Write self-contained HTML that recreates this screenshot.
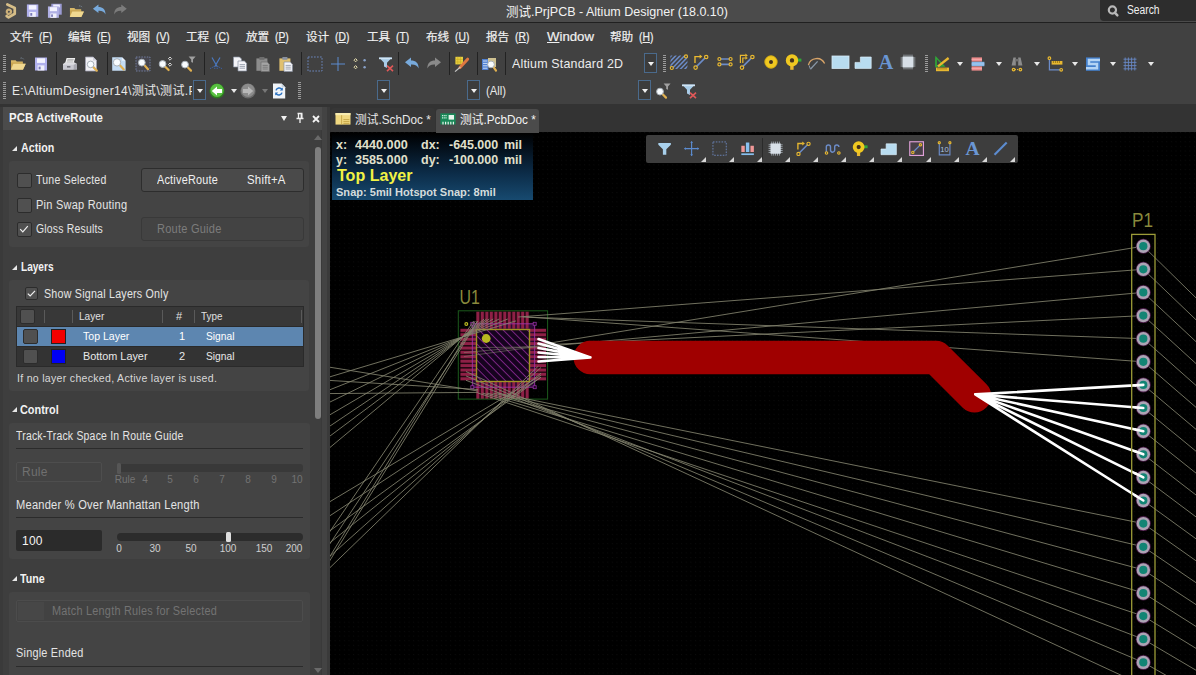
<!DOCTYPE html>
<html><head><meta charset="utf-8"><title>Altium Designer</title>
<style>
html,body{margin:0;padding:0;background:#000;}
body{width:1196px;height:675px;position:relative;overflow:hidden;font-family:"Liberation Sans","Noto Sans CJK SC",sans-serif;font-size:12px;color:#e6e6e6;}
.a{position:absolute;}
.t{position:absolute;white-space:nowrap;line-height:14px;height:14px;}
svg{position:absolute;overflow:visible;}
#title{left:0;top:0;width:1196px;height:22px;background:#4b4b4b;}
#titleline{left:0;top:22px;width:1196px;height:1px;background:#202020;}
#chrome{left:0;top:23px;width:1196px;height:81px;background:#414141;}
#under{left:0;top:104px;width:1196px;height:28px;background:#333333;}
.menu{top:30px;font-size:12.5px;color:#f0f0f0;-webkit-text-stroke:0.2px #f0f0f0;}
.menu u{text-decoration:underline;text-underline-offset:1px;text-decoration-thickness:1px;}
.sep{position:absolute;width:1px;background:#222;}
.grip{position:absolute;width:3px;background:repeating-linear-gradient(to bottom,#9c9c9c 0,#9c9c9c 1px,transparent 1px,transparent 2px);}
.dd{position:absolute;width:13px;height:20px;border:1px solid #4a6a8c;box-sizing:border-box;background:#3c3c3c;}
.dd:after{content:"";position:absolute;left:3px;top:8px;border-left:3px solid transparent;border-right:3px solid transparent;border-top:4px solid #f0f0f0;}
.tri{position:absolute;width:0;height:0;border-left:3px solid transparent;border-right:3px solid transparent;border-top:4px solid #e8e8e8;}
</style></head><body>
<div id="title" class="a"></div>
<div id="titleline" class="a"></div>
<div id="chrome" class="a"></div><div id="under" class="a"></div>
<div class="t" style="transform:scaleX(0.963);transform-origin:0 0;left:506.4px;top:5px;font-size:13px;color:#f2f2f2;">测试.PrjPCB - Altium Designer (18.0.10)</div>
<div class="a" style="left:1100px;top:0;width:96px;height:21px;background:#2d2d2d;border-bottom-left-radius:4px;"></div>
<svg style="left:1104px;top:2px" width="18" height="18" viewBox="0 0 18 18"><circle cx="8.4" cy="8" r="3.6" fill="none" stroke="#b8b8b8" stroke-width="2.2"/><path d="M10.8 10.6 L13.4 13.4" stroke="#b8b8b8" stroke-width="2.4" stroke-linecap="round"/></svg>
<div class="t" style="transform:scaleX(0.857);transform-origin:0 0;left:1126.7px;top:3px;font-size:12px;color:#f0f0f0;">Search</div>
<div class="t menu" style="left:10px;font-size:11.6px">文件</div><div class="t menu" style="left:38.6px;font-size:12px;transform:scaleX(0.86);transform-origin:0 0">(<u>F</u>)</div>
<div class="t menu" style="left:68px;font-size:11.6px">编辑</div><div class="t menu" style="left:96.6px;font-size:12px;transform:scaleX(0.86);transform-origin:0 0">(<u>E</u>)</div>
<div class="t menu" style="left:127px;font-size:11.6px">视图</div><div class="t menu" style="left:155.6px;font-size:12px;transform:scaleX(0.86);transform-origin:0 0">(<u>V</u>)</div>
<div class="t menu" style="left:186px;font-size:11.6px">工程</div><div class="t menu" style="left:214.6px;font-size:12px;transform:scaleX(0.86);transform-origin:0 0">(<u>C</u>)</div>
<div class="t menu" style="left:246px;font-size:11.6px">放置</div><div class="t menu" style="left:274.6px;font-size:12px;transform:scaleX(0.86);transform-origin:0 0">(<u>P</u>)</div>
<div class="t menu" style="left:306px;font-size:11.6px">设计</div><div class="t menu" style="left:334.6px;font-size:12px;transform:scaleX(0.86);transform-origin:0 0">(<u>D</u>)</div>
<div class="t menu" style="left:367px;font-size:11.6px">工具</div><div class="t menu" style="left:395.6px;font-size:12px;transform:scaleX(0.86);transform-origin:0 0">(<u>T</u>)</div>
<div class="t menu" style="left:426px;font-size:11.6px">布线</div><div class="t menu" style="left:454.6px;font-size:12px;transform:scaleX(0.86);transform-origin:0 0">(<u>U</u>)</div>
<div class="t menu" style="left:486px;font-size:11.6px">报告</div><div class="t menu" style="left:514.6px;font-size:12px;transform:scaleX(0.86);transform-origin:0 0">(<u>R</u>)</div>
<div class="t menu" style="transform:scaleX(1.057);transform-origin:0 0;left:547.0px;font-size:12.5px"><u>W</u>indow</div>
<div class="t menu" style="left:610px;font-size:11.6px">帮助</div><div class="t menu" style="left:638.6px;font-size:12px;transform:scaleX(0.86);transform-origin:0 0">(<u>H</u>)</div>
<div class="sep" style="left:56px;top:52px;height:23px"></div>
<div class="sep" style="left:107px;top:52px;height:23px"></div>
<div class="sep" style="left:204px;top:52px;height:23px"></div>
<div class="sep" style="left:301px;top:52px;height:23px"></div>
<div class="sep" style="left:398px;top:52px;height:23px"></div>
<div class="sep" style="left:449px;top:52px;height:23px"></div>
<div class="sep" style="left:477px;top:52px;height:23px"></div>
<div class="sep" style="left:505px;top:52px;height:23px"></div>
<div class="grip" style="left:3px;top:55px;height:17px"></div>
<div class="grip" style="left:3px;top:82px;height:17px"></div>
<div class="grip" style="left:298px;top:82px;height:17px"></div>
<div class="grip" style="left:663px;top:55px;height:17px"></div>
<div class="grip" style="left:925px;top:55px;height:17px"></div>
<div class="t" style="transform:scaleX(0.956);transform-origin:0 0;left:511.8px;top:57px;font-size:13px;color:#ececec;letter-spacing:0.2px">Altium Standard 2D</div>
<div class="dd" style="left:644px;top:53px"></div>
<div class="a" style="left:10px;top:82px;width:182px;height:17px;overflow:hidden"><div class="t" style="left:2px;top:2px;font-size:12px;color:#e8e8e8;letter-spacing:0.35px">E:\AltiumDesigner14\测试\测试.PcbDoc</div></div>
<div class="dd" style="left:193px;top:80px"></div>
<div class="dd" style="left:377px;top:80px"></div>
<div class="dd" style="left:467px;top:80px"></div>
<div class="dd" style="left:638px;top:80px"></div>
<div class="t" style="transform:scaleX(0.942);transform-origin:0 0;left:485.9px;top:84px;font-size:12px;color:#e8e8e8;">(All)</div>
<div class="tri" style="left:957px;top:62px"></div>
<div class="tri" style="left:996px;top:62px"></div>
<div class="tri" style="left:1034px;top:62px"></div>
<div class="tri" style="left:1072px;top:62px"></div>
<div class="tri" style="left:1110px;top:62px"></div>
<div class="tri" style="left:1148px;top:62px"></div>
<div class="tri" style="left:231px;top:89px"></div><div class="tri" style="left:262px;top:89px;border-top-color:#777"></div>
<svg style="left:4.4px;top:2.2px" width="20" height="20" viewBox="0 0 22.73 22.73"><path d="M3.8 2.8L12.2 6.8V13.4L5.2 17.4L3 16" stroke="#d6be88" stroke-width="3.1" fill="none" stroke-linejoin="round" stroke-linecap="round"/><path d="M3.2 11.6C2.8 8 8 7.6 8 11C8 13 5.8 14 4 13.2" stroke="#ccb078" stroke-width="2.6" fill="none" stroke-linecap="round"/></svg>
<svg style="left:25.4px;top:3.4px" width="16" height="16" viewBox="0 0 16.84 16.84"><rect x="2" y="1.5" width="12" height="13" fill="#b0b0ec"/><rect x="4" y="2.3" width="8" height="4.6" fill="#f4f4ff"/><rect x="4.6" y="9.4" width="6.8" height="5.1" fill="#f0f0fa"/><rect x="5.6" y="10.6" width="2" height="2.8" fill="#7878b8"/></svg>
<svg style="left:47.4px;top:3.4px" width="16" height="16" viewBox="0 0 16.84 16.84"><rect x="4.5" y="0.8" width="11" height="11.5" fill="#9c9cd4"/><rect x="6.5" y="1.6" width="7" height="3" fill="#f0f0ff"/><rect x="1" y="3.6" width="11.5" height="12" fill="#b0b0e4"/><rect x="3" y="4.4" width="7.5" height="4.2" fill="#f4f4ff"/><rect x="3.6" y="11" width="6.4" height="4.6" fill="#f0f0fa"/><rect x="4.4" y="12" width="1.8" height="2.6" fill="#7878b8"/></svg>
<svg style="left:69.4px;top:4.4px" width="16" height="16" viewBox="0 0 16.84 16.84"><path d="M1 4.2h4.6l1.2 1.4h6v2H1z" fill="#d8b868"/><path d="M1 13.6V6.6h11.8v1.2H15.6L13 13.6z" fill="#c8a450"/><path d="M3.4 7.8H15.8L13 13.8H0.8z" fill="#f0d890"/><path d="M10.5 2.2c1.4-.6 2.6 0 3.2 1.2" stroke="#7a8a9a" stroke-width="0.9" fill="none" stroke-dasharray="1.4 0.8"/></svg>
<svg style="left:91.6px;top:3.1px" width="16" height="16" viewBox="0 0 17.39 17.39"><path d="M1 6.2L7 1.6V4.4C11.6 4.4 14.8 7 14.6 12.4C13.4 9.4 11 8.2 7 8.4V11z" fill="#78aadc"/></svg>
<svg style="left:113.1px;top:3.1px" width="16" height="16" viewBox="0 0 17.39 17.39"><path d="M15 6.2L9 1.6V4.4C4.4 4.4 1.2 7 1.4 12.4C2.6 9.4 5 8.2 9 8.4V11z" fill="#7c7c7c"/></svg>
<svg style="left:9.6px;top:55.5px" width="16" height="16" viewBox="0 0 16.00 16.00"><path d="M1 4.2h4.6l1.2 1.4h6v2H1z" fill="#d8b868"/><path d="M1 13.6V6.6h11.8v1.2H15.6L13 13.6z" fill="#c8a450"/><path d="M3.4 7.8H15.8L13 13.8H0.8z" fill="#f0d890"/><path d="M10.5 2.2c1.4-.6 2.6 0 3.2 1.2" stroke="#7a8a9a" stroke-width="0.9" fill="none" stroke-dasharray="1.4 0.8"/></svg>
<svg style="left:32.8px;top:55.5px" width="16" height="16" viewBox="0 0 16.00 16.00"><rect x="2" y="1.5" width="12" height="13" fill="#b0b0ec"/><rect x="4" y="2.3" width="8" height="4.6" fill="#f4f4ff"/><rect x="4.6" y="9.4" width="6.8" height="5.1" fill="#f0f0fa"/><rect x="5.6" y="10.6" width="2" height="2.8" fill="#7878b8"/></svg>
<svg style="left:61.6px;top:55.5px" width="16" height="16" viewBox="0 0 16.00 16.00"><path d="M4.6 2h8.6l-1.6 5.6H3z" fill="#f4f4f4"/><path d="M5.4 3.4h6.4M5 4.8h6.4M4.6 6.2h6.4" stroke="#9a9a9a" stroke-width="0.7"/><path d="M1 8L3 6.6h9.6L15 8v5.4H1z" fill="#dcdce0"/><rect x="1" y="8.8" width="10.6" height="4.8" fill="#c8c8d0"/><path d="M11.6 8.8L15 7.6v5.2l-3.4 0.8z" fill="#a8a8b0"/><rect x="5" y="10" width="3.4" height="1.6" fill="#707078"/></svg>
<svg style="left:83.0px;top:55.5px" width="16" height="16" viewBox="0 0 16.00 16.00"><path d="M2.5 1h7.6l3.4 3.4V15H2.5z" fill="#f0f0f4" stroke="#a0a0b0" stroke-width="0.8"/><path d="M10 1v3.6h3.6" fill="#d0d0dc"/><path d="M9.975999999999999 10.776L13.8 14.6" stroke="#e0b050" stroke-width="2.2" stroke-linecap="round"/><circle cx="7.6" cy="8.4" r="3.3" fill="#f8fcff" stroke="#a8b0b8" stroke-width="1"/></svg>
<svg style="left:111.2px;top:55.5px" width="16" height="16" viewBox="0 0 16.00 16.00"><path d="M1.2 1.2h9.8l3.6 3.6V14.8H1.2z" fill="#c4dcf4"/><path d="M11 1.2v3.6h3.6" fill="#e8f0fa"/><path d="M8.664 9.064L12.8 13.4" stroke="#e0b050" stroke-width="2.2" stroke-linecap="round"/><circle cx="6" cy="6.4" r="3.7" fill="#f8fcff" stroke="#a8b0b8" stroke-width="1"/></svg>
<svg style="left:134.6px;top:55.5px" width="16" height="16" viewBox="0 0 16.00 16.00"><rect x="1" y="1" width="14" height="14" fill="#46464e" stroke="#7c8ab4" stroke-width="0.8" stroke-dasharray="1.5 1.2"/><path d="M9.248 9.048L13 13.2" stroke="#e0b050" stroke-width="2.2" stroke-linecap="round"/><circle cx="6.8" cy="6.6" r="3.4" fill="#f8fcff" stroke="#a8b0b8" stroke-width="1"/></svg>
<svg style="left:157.4px;top:55.5px" width="16" height="16" viewBox="0 0 16.00 16.00"><path d="M8.048 10.448L11.6 14" stroke="#e0b050" stroke-width="2.2" stroke-linecap="round"/><circle cx="5.6" cy="8" r="3.4" fill="#f8fcff" stroke="#a8b0b8" stroke-width="1"/><path d="M13 1l1.6 1.6L13 4.2 11.4 2.6zM13 7l1.6 1.6L13 10.2 11.4 8.6z" fill="none" stroke="#e8e8e8" stroke-width="0.9"/></svg>
<svg style="left:179.8px;top:55.5px" width="16" height="16" viewBox="0 0 16.00 16.00"><path d="M7.448 11.048L11 14.6" stroke="#e0b050" stroke-width="2.2" stroke-linecap="round"/><circle cx="5" cy="8.6" r="3.4" fill="#f8fcff" stroke="#a8b0b8" stroke-width="1"/><path d="M8.6 0.6h7l-2.6 3v3.2l-1.8 -0.8V3.6z" fill="#a0a0a0"/></svg>
<svg style="left:208.2px;top:55.5px" width="16" height="16" viewBox="0 0 16.00 16.00"><path d="M4 1.5L9.4 11M12 1.5L6.6 11" stroke="#4a78c0" stroke-width="1.2"/><path d="M2 12.6l4 -2 1 2.4M14 12.6l-4 -2 -1 2.4" stroke="#3a60a8" stroke-width="1" fill="none" stroke-dasharray="1.2 0.8"/></svg>
<svg style="left:231.6px;top:55.5px" width="16" height="16" viewBox="0 0 16.00 16.00"><path d="M1.5 1h6l2 2v8h-8z" fill="#f4f4f8" stroke="#8890a0" stroke-width="0.7"/><path d="M6 5h6.4l2.2 2.2V15H6z" fill="#f4f4f8" stroke="#8890a0" stroke-width="0.7"/><path d="M7.6 8.6h5.4M7.6 10.4h5.4M7.6 12.2h5.4" stroke="#8890a0" stroke-width="0.8"/></svg>
<svg style="left:255.0px;top:55.5px" width="16" height="16" viewBox="0 0 16.00 16.00"><rect x="1.4" y="2.4" width="11" height="12.4" fill="#8c8c8c"/><rect x="4.4" y="1" width="5" height="2.8" fill="#6e6e6e"/><path d="M6 6h6.2l2.2 2.2V15.4H6z" fill="#a4a4a4" stroke="#6e6e6e" stroke-width="0.7"/><path d="M7.6 9.4h5.2M7.6 11.2h5.2M7.6 13h5.2" stroke="#6e6e6e" stroke-width="0.8"/></svg>
<svg style="left:277.8px;top:55.5px" width="16" height="16" viewBox="0 0 16.00 16.00"><rect x="1.4" y="2.4" width="11" height="12.4" fill="#e0c070"/><rect x="4.4" y="1" width="5" height="2.8" fill="#8890a0"/><path d="M6 6h6.2l2.2 2.2V15.4H6z" fill="#f4f4f8" stroke="#8890a0" stroke-width="0.7"/><path d="M7.6 9.4h5.2M7.6 11.2h5.2M7.6 13h5.2" stroke="#8890a0" stroke-width="0.8"/></svg>
<svg style="left:306.5px;top:55.5px" width="16" height="16" viewBox="0 0 16.00 16.00"><rect x="1" y="1" width="14" height="14" fill="none" stroke="#6a84b8" stroke-width="1" stroke-dasharray="1.7 1.3"/></svg>
<svg style="left:329.5px;top:55.5px" width="16" height="16" viewBox="0 0 16.00 16.00"><path d="M8 1v14M1 8h14" stroke="#5c8cd0" stroke-width="1"/></svg>
<svg style="left:352.2px;top:55.5px" width="16" height="16" viewBox="0 0 16.00 16.00"><path d="M3.6 2.6l1.6 1.6-1.6 1.6L2 4.2zM3.6 9.6l1.6 1.6-1.6 1.6L2 11.2z" fill="none" stroke="#e8e0b0" stroke-width="1"/><circle cx="12.6" cy="4.2" r="1.2" fill="#88a0c8"/><circle cx="12.6" cy="11.2" r="1.2" fill="#88a0c8"/></svg>
<svg style="left:378.2px;top:55.5px" width="16" height="16" viewBox="0 0 16.00 16.00"><path d="M1 1.6h13l-5 5.2V12l-3 -1.4V6.8z" fill="#a8cce8"/><rect x="1" y="1.6" width="13" height="1.6" fill="#d0e4f4"/><path d="M9 9.6l6 5.6M15 9.6l-6 5.6" stroke="#e05858" stroke-width="1.6"/></svg>
<svg style="left:404.0px;top:55.5px" width="16" height="16" viewBox="0 0 16.00 16.00"><path d="M1 6.2L7 1.6V4.4C11.6 4.4 14.8 7 14.6 12.4C13.4 9.4 11 8.2 7 8.4V11z" fill="#78aadc"/></svg>
<svg style="left:425.8px;top:55.5px" width="16" height="16" viewBox="0 0 16.00 16.00"><path d="M15 6.2L9 1.6V4.4C4.4 4.4 1.2 7 1.4 12.4C2.6 9.4 5 8.2 9 8.4V11z" fill="#8a8a8a"/></svg>
<svg style="left:453.4px;top:55.5px" width="16" height="16" viewBox="0 0 16.00 16.00"><rect x="2.4" y="0.8" width="7.6" height="7.6" fill="#e8d040"/><path d="M4.8 0.8v7.6M7.4 0.8v7.6M2.4 3.4h7.6M2.4 6h7.6" stroke="#c8a820" stroke-width="0.6"/><path d="M14.6 3.2L7 11.4" stroke="#e07840" stroke-width="3" stroke-linecap="round"/><path d="M7.4 11L2 15.6" stroke="#c8c8c8" stroke-width="1.2"/></svg>
<svg style="left:481.2px;top:55.5px" width="16" height="16" viewBox="0 0 16.00 16.00"><rect x="1" y="3" width="6.4" height="11" fill="#5080d0"/><path d="M2 5h4.4M2 7.4h4.4M2 9.8h4.4M2 12.2h4.4" stroke="#c8dcf8" stroke-width="1"/><rect x="7" y="2" width="8" height="9" fill="#e8d8a0" opacity="0.85"/><path d="M12.448 10.848L15 14.6" stroke="#e0b050" stroke-width="2.2" stroke-linecap="round"/><circle cx="10" cy="8.4" r="3.4" fill="#f8fcff" stroke="#a8b0b8" stroke-width="1"/></svg>
<svg style="left:670.8px;top:54.4px" width="16" height="16" viewBox="0 0 16.00 16.00"><clipPath id="arclip"><rect x="-0.6" y="1.6" width="17" height="13.4"/></clipPath><g clip-path="url(#arclip)"><g stroke="#6c8cc8" stroke-width="1.5"><path d="M-13 15.5L1 1"/><path d="M-8.6 15.5L5.4 1"/><path d="M-4.2 15.5L9.8 1"/><path d="M0.2 15.5L14.2 1"/><path d="M4.6 15.5L18.6 1"/><path d="M9 15.5L23 1"/><path d="M13.4 15.5L27.4 1"/></g></g><circle cx="0.8" cy="14" r="1.5" fill="#414141" stroke="#e8b830" stroke-width="1.2"/><circle cx="15" cy="2.4" r="1.5" fill="#414141" stroke="#e8b830" stroke-width="1.2"/></svg>
<svg style="left:693.0px;top:54.4px" width="16" height="16" viewBox="0 0 16.00 16.00"><path d="M2.6 13.4L12.6 3.4" stroke="#6c8cc8" stroke-width="1.6"/><path d="M2 9V2.6h5" stroke="#e8b830" stroke-width="1.4" fill="none"/><path d="M6.6 0.4L9.4 2.6 6.6 4.8z" fill="#e8b830"/><circle cx="2.6" cy="13.6" r="1.7" fill="#414141" stroke="#e8b830" stroke-width="1.2"/><circle cx="13.2" cy="3" r="1.7" fill="#414141" stroke="#e8b830" stroke-width="1.2"/></svg>
<svg style="left:716.9px;top:54.4px" width="16" height="16" viewBox="0 0 16.00 16.00"><path d="M3 5h10M3 10.4h10" stroke="#6c8cc8" stroke-width="1.6"/><circle cx="2.4" cy="5" r="1.5" fill="#414141" stroke="#e8b830" stroke-width="1.2"/><circle cx="13.6" cy="5" r="1.5" fill="#414141" stroke="#e8b830" stroke-width="1.2"/><circle cx="2.4" cy="10.4" r="1.5" fill="#414141" stroke="#e8b830" stroke-width="1.2"/><circle cx="13.6" cy="10.4" r="1.5" fill="#414141" stroke="#e8b830" stroke-width="1.2"/></svg>
<svg style="left:739.0px;top:54.4px" width="16" height="16" viewBox="0 0 16.00 16.00"><path d="M3 13.4L13 3.4" stroke="#6c8cc8" stroke-width="1.6"/><path d="M1.4 9V1.4h5.4M3.8 9V4h3" stroke="#e8b830" stroke-width="1.2" fill="none"/><path d="M6.4 -0.4L8.8 1.4 6.4 3.2zM6.4 2.4L8.8 4 6.4 5.8z" fill="#e8b830"/><circle cx="3" cy="13.6" r="1.7" fill="#414141" stroke="#e8b830" stroke-width="1.2"/><circle cx="13.4" cy="3" r="1.7" fill="#414141" stroke="#e8b830" stroke-width="1.2"/></svg>
<svg style="left:763.2px;top:54.4px" width="16" height="16" viewBox="0 0 16.00 16.00"><circle cx="8" cy="8" r="4.2" fill="none" stroke="#f0c820" stroke-width="4.4"/><circle cx="8" cy="8" r="6.2" fill="none" stroke="#c8a010" stroke-width="0.7"/><circle cx="8" cy="8" r="1.5" fill="#4a3010"/></svg>
<svg style="left:785.4px;top:54.4px" width="16" height="16" viewBox="0 0 16.00 16.00"><rect x="10.4" y="4.6" width="6" height="3" fill="#30a838"/><rect x="5.2" y="10.4" width="3.4" height="5.4" fill="#e8b830"/><circle cx="7" cy="6.4" r="4.2" fill="none" stroke="#f0c820" stroke-width="4"/><circle cx="7" cy="6.4" r="1.8" fill="#4a3010"/></svg>
<svg style="left:808.4px;top:54.4px" width="16" height="16" viewBox="0 0 16.00 16.00"><path d="M0.4 11A8.6 8.6 0 0 1 16.6 9.6" stroke="#d8a468" stroke-width="1.3" fill="none"/><path d="M2.6 15L9.6 7.4" stroke="#8a98a8" stroke-width="1.3"/><path d="M1 11.4l1.6 4" stroke="#8a98a8" stroke-width="1"/></svg>
<svg style="left:831.8px;top:54.4px" width="16" height="16" viewBox="0 0 16.00 16.00"><rect x="0" y="2" width="17" height="12.4" fill="#b8dcf0"/><rect x="0" y="2" width="17" height="12.4" fill="none" stroke="#d8ecf8" stroke-width="0.8"/></svg>
<svg style="left:854.9px;top:54.4px" width="16" height="16" viewBox="0 0 16.00 16.00"><path d="M0 14.4V8.4h5.4V3h10.8v11.4z" fill="#b8dcf0"/><path d="M0 14.4V8.4h5.4V3h10.8v11.4z" fill="none" stroke="#d8ecf8" stroke-width="0.7"/></svg>
<svg style="left:877.6px;top:54.4px" width="16" height="16" viewBox="0 0 16.00 16.00"><text x="8" y="15" text-anchor="middle" font-family="Liberation Serif, serif" font-size="20.5" font-weight="bold" fill="#6a96d4">A</text></svg>
<svg style="left:900.0px;top:54.4px" width="16" height="16" viewBox="0 0 16.00 16.00"><path d="M4 0.6v14.8M0.6 4h14.8" stroke="#a8b0b8" stroke-width="0.9"/><path d="M6 0.6v14.8M0.6 6h14.8" stroke="#a8b0b8" stroke-width="0.9"/><path d="M8 0.6v14.8M0.6 8h14.8" stroke="#a8b0b8" stroke-width="0.9"/><path d="M10 0.6v14.8M0.6 10h14.8" stroke="#a8b0b8" stroke-width="0.9"/><path d="M12 0.6v14.8M0.6 12h14.8" stroke="#a8b0b8" stroke-width="0.9"/><rect x="2.6" y="2.6" width="10.8" height="10.8" fill="#d8e0e8"/></svg>
<svg style="left:933.5px;top:56.0px" width="16" height="16" viewBox="0 0 16.00 16.00"><path d="M2 11.6V1.6M2 11.6" stroke="#30a838" stroke-width="1.2"/><path d="M2 1.4l8 8.6H2z" fill="none" stroke="#30a838" stroke-width="1.3"/><path d="M4 10.4L14.6 2" stroke="#e8b830" stroke-width="2.4"/><rect x="2" y="11.6" width="13" height="3.6" fill="#e8b830"/><path d="M4 11.6v2M6 11.6v2M8 11.6v2M10 11.6v2M12 11.6v2" stroke="#806010" stroke-width="0.7"/></svg>
<svg style="left:970.3px;top:56.0px" width="16" height="16" viewBox="0 0 16.00 16.00"><rect x="1.6" y="1.4" width="10.4" height="4.2" fill="#ee8c8c"/><rect x="1.6" y="5.8" width="12.8" height="4.4" fill="#88b8e8"/><rect x="1.6" y="10.4" width="10.4" height="4.2" fill="#ee8c8c"/><path d="M1.6 3.4h10.4M1.6 12.4h10.4" stroke="#f8b0b0" stroke-width="0.8"/><path d="M1.6 8h12.8" stroke="#b0d4f4" stroke-width="0.8"/></svg>
<svg style="left:1008.7px;top:56.0px" width="16" height="16" viewBox="0 0 16.00 16.00"><path d="M2.6 9.6L4.4 1.6h2.4v8zM13.4 9.6L11.6 1.6H9.2v8z" fill="#8c8c8c"/><rect x="6.4" y="3" width="3.2" height="2.4" fill="#707070"/><circle cx="4.6" cy="13.6" r="1.3" fill="#414141" stroke="#e8b830" stroke-width="1.2"/><circle cx="11.4" cy="13.6" r="1.3" fill="#414141" stroke="#e8b830" stroke-width="1.2"/><path d="M6 13.6h4" stroke="#e8b830" stroke-width="1" stroke-dasharray="1 1"/></svg>
<svg style="left:1047.2px;top:56.0px" width="16" height="16" viewBox="0 0 16.00 16.00"><path d="M2.4 2.4v11.4h11.6" stroke="#6c8cc8" stroke-width="1.2" fill="none"/><rect x="4.6" y="5" width="10.8" height="3.6" fill="#e8b830"/><path d="M6.4 5v2M8.4 5v2M10.4 5v2M12.4 5v2" stroke="#806010" stroke-width="0.7"/><circle cx="2.4" cy="2.2" r="1.3" fill="#414141" stroke="#e8b830" stroke-width="1.2"/><circle cx="14.2" cy="13.8" r="1.3" fill="#414141" stroke="#e8b830" stroke-width="1.2"/></svg>
<svg style="left:1085.0px;top:56.0px" width="16" height="16" viewBox="0 0 16.00 16.00"><rect x="1" y="1.4" width="14" height="13.4" fill="#4480cc"/><path d="M15 4H4V8.1H12V12.2H1" stroke="#b4d4f4" stroke-width="2.5" fill="none"/></svg>
<svg style="left:1122.4px;top:56.0px" width="16" height="16" viewBox="0 0 16.00 16.00"><path d="M3.2 1.5v13M1.5 3.2h13" stroke="#6888c4" stroke-width="0.9"/><path d="M6.4 1.5v13M1.5 6.4h13" stroke="#6888c4" stroke-width="0.9"/><path d="M9.6 1.5v13M1.5 9.6h13" stroke="#6888c4" stroke-width="0.9"/><path d="M12.8 1.5v13M1.5 12.8h13" stroke="#6888c4" stroke-width="0.9"/></svg>
<svg style="left:209.0px;top:82.6px" width="16" height="16" viewBox="0 0 16.00 16.00"><circle cx="8" cy="8" r="7.6" fill="#2c7820"/><circle cx="8" cy="7.4" r="6.6" fill="#58c040"/><path d="M2.8 8L8 3.4V6h5v4H8v2.6z" fill="#ffffff"/></svg>
<svg style="left:240.0px;top:82.6px" width="16" height="16" viewBox="0 0 16.00 16.00"><circle cx="8" cy="8" r="7.6" fill="#6a6a6a"/><circle cx="8" cy="7.4" r="6.6" fill="#8c8c8c"/><path d="M13.2 8L8 3.4V6H3v4h5v2.6z" fill="#b8b8b8"/></svg>
<svg style="left:271.0px;top:82.6px" width="16" height="16" viewBox="0 0 16.00 16.00"><path d="M2 0.6h8.6l3.6 3.6V15.4H2z" fill="#f0f4f8"/><path d="M10.6 0.6v3.6h3.6" fill="#c8d4e0"/><path d="M5 7.4A3.4 3.4 0 0 1 11 6.4M11 9.6A3.4 3.4 0 0 1 5 10.6" stroke="#2870c0" stroke-width="1.5" fill="none"/><path d="M11.8 4.4v3h-3zM4.2 12.6v-3h3z" fill="#2870c0"/></svg>
<svg style="left:654.5px;top:82.6px" width="16" height="16" viewBox="0 0 16.00 16.00"><path d="M7.448 11.048L11 14.6" stroke="#e0b050" stroke-width="2.2" stroke-linecap="round"/><circle cx="5" cy="8.6" r="3.4" fill="#f8fcff" stroke="#a8b0b8" stroke-width="1"/><path d="M8.6 0.6h7l-2.6 3v3.2l-1.8 -0.8V3.6z" fill="#a0a0a0"/></svg>
<svg style="left:680.5px;top:82.6px" width="16" height="16" viewBox="0 0 16.00 16.00"><path d="M1 1.6h13l-5 5.2V12l-3 -1.4V6.8z" fill="#a8cce8"/><rect x="1" y="1.6" width="13" height="1.6" fill="#d0e4f4"/><path d="M9 9.6l6 5.6M15 9.6l-6 5.6" stroke="#e05858" stroke-width="1.6"/></svg>

<style>
#panel{left:0;top:107px;width:330px;height:568px;background:#3a3a3a;}
#pbody{left:3px;top:130px;width:318px;height:546px;background:#3e3e3e;}
#phead{left:3px;top:107px;width:319px;height:23px;background:#4b4b4b;}
#gap{left:322px;top:107px;width:5px;height:568px;background:#434343;}
.grp{position:absolute;background:#444444;border-radius:3px;}
.sec{font-weight:bold;color:#f2f2f2;font-size:12px;}
.arr{position:absolute;width:0;height:0;border-left:5.4px solid transparent;border-bottom:5.4px solid #e8e8e8;margin-top:0.6px;margin-left:0.6px}
.cb{position:absolute;width:14.5px;height:14.5px;box-sizing:border-box;background:#505050;border:1px solid #2c2c2c;border-radius:2px;}
.lbl{color:#e4e4e4;font-size:12px;letter-spacing:0.25px;}
.btn{position:absolute;box-sizing:border-box;border:1px solid #2d2d2d;border-radius:3px;background:#4a4a4a;}
.hr{position:absolute;height:1px;background:#2b2b2b;}
.sl{font-size:10px;color:#cfcfcf;transform:translateX(-50%);}
.sld{font-size:10px;color:#737373;transform:translateX(-50%);}
</style>
<div id="panel" class="a"></div><div id="pbody" class="a"></div><div id="phead" class="a"></div><div id="gap" class="a"></div>
<div class="t" style="transform:scaleX(0.917);transform-origin:0 0;left:8.7px;top:111px;font-weight:bold;font-size:12.5px;color:#f4f4f4;">PCB ActiveRoute</div>
<div class="a" style="left:281px;top:116px;width:0;height:0;border-left:3.6px solid transparent;border-right:3.6px solid transparent;border-top:5px solid #f0f0f0;"></div>
<svg style="left:294px;top:112px" width="12" height="12" viewBox="0 0 12 12"><path d="M3.5 1.5h5M4.5 1.5v5M7.8 1.5v5M2.5 6.5h7M6 6.5v4.5" stroke="#f0f0f0" stroke-width="1.3" fill="none"/><rect x="6.6" y="2" width="1.6" height="4.5" fill="#f0f0f0"/></svg>
<svg style="left:311.3px;top:113.7px" width="10" height="10" viewBox="0 0 10 10"><path d="M2 2L8 8M8 2L2 8" stroke="#f4f4f4" stroke-width="1.8"/></svg>

<div class="arr" style="left:11px;top:145px"></div>
<div class="t sec" style="transform:scaleX(0.889);transform-origin:0 0;left:20.7px;top:141px;">Action</div>
<div class="grp" style="left:9px;top:161px;width:300px;height:86px"></div>
<div class="cb" style="left:17px;top:173px"></div><div class="t lbl" style="transform:scaleX(0.879);transform-origin:0 0;left:36.3px;top:173px">Tune Selected</div>
<div class="cb" style="left:17px;top:198px"></div><div class="t lbl" style="transform:scaleX(0.918);transform-origin:0 0;left:36.3px;top:198px">Pin Swap Routing</div>
<div class="cb" style="left:17px;top:222px"></div><div class="t lbl" style="transform:scaleX(0.866);transform-origin:0 0;left:36.3px;top:222px">Gloss Results</div>
<svg style="left:17px;top:222px" width="14" height="14" viewBox="0 0 14 14"><path d="M3.2 7.2L5.8 9.8L10.8 4.2" stroke="#f0f0f0" stroke-width="1.2" fill="none"/></svg>
<div class="btn" style="left:141px;top:168px;width:163px;height:24px"></div>
<div class="t lbl" style="transform:scaleX(0.904);transform-origin:0 0;left:157.0px;top:173px;color:#f0f0f0">ActiveRoute</div>
<div class="t lbl" style="transform:scaleX(0.949);transform-origin:0 0;left:247.3px;top:173px;color:#f0f0f0">Shift+A</div>
<div class="btn" style="left:141px;top:217px;width:163px;height:24px;background:#434343;border-color:#393939"></div>
<div class="t lbl" style="transform:scaleX(0.920);transform-origin:0 0;left:157.0px;top:222px;color:#7c7c7c">Route Guide</div>

<div class="arr" style="left:11px;top:264px"></div>
<div class="t sec" style="transform:scaleX(0.840);transform-origin:0 0;left:20.9px;top:260px;">Layers</div>
<div class="grp" style="left:9px;top:280px;width:300px;height:111px"></div>
<div class="cb" style="left:25px;top:287px;width:13px;height:13px"></div>
<svg style="left:25px;top:287px" width="13" height="13" viewBox="0 0 13 13"><path d="M2.8 6.6L5.2 9L10 3.8" stroke="#f0f0f0" stroke-width="1.2" fill="none"/></svg>
<div class="t lbl" style="transform:scaleX(0.890);transform-origin:0 0;left:43.6px;top:287px">Show Signal Layers Only</div>
<div class="a" style="left:16px;top:306px;width:288px;height:61px;background:#2a2a2a;"></div>
<div class="a" style="left:17px;top:307px;width:286px;height:19px;background:#383838;"></div>
<div class="a" style="left:17px;top:327px;width:286px;height:19px;background:#5d86b0;"></div>
<div class="a" style="left:17px;top:347px;width:286px;height:19px;background:#333333;"></div>
<div class="cb" style="left:20px;top:309px;"></div>
<div class="cb" style="left:23px;top:329px;"></div>
<div class="cb" style="left:23px;top:349px;"></div>
<div class="a" style="left:51px;top:329px;width:15px;height:15px;background:#f40000;border:1px solid #222;box-sizing:border-box"></div>
<div class="a" style="left:51px;top:349px;width:15px;height:15px;background:#0000f4;border:1px solid #222;box-sizing:border-box"></div>
<div class="sep" style="left:44px;top:310px;height:13px;background:#5a5a5a"></div>
<div class="sep" style="left:72px;top:310px;height:13px;background:#5a5a5a"></div>
<div class="sep" style="left:162px;top:310px;height:13px;background:#5a5a5a"></div>
<div class="sep" style="left:194px;top:310px;height:13px;background:#5a5a5a"></div>
<div class="sep" style="left:301px;top:310px;height:13px;background:#5a5a5a"></div>
<div class="t" style="transform:scaleX(0.919);transform-origin:0 0;left:79.2px;top:309px;font-size:11px;color:#e0e0e0">Layer</div>
<div class="t" style="left:176px;top:309px;font-size:11px;color:#e0e0e0">#</div>
<div class="t" style="transform:scaleX(0.897);transform-origin:0 0;left:201.0px;top:309px;font-size:11px;color:#e0e0e0">Type</div>
<div class="t" style="transform:scaleX(0.958);transform-origin:0 0;left:83.2px;top:329px;font-size:11px;color:#fff">Top Layer</div>
<div class="t" style="left:179px;top:329px;font-size:11px;color:#fff">1</div>
<div class="t" style="transform:scaleX(0.932);transform-origin:0 0;left:205.5px;top:329px;font-size:11px;color:#fff">Signal</div>
<div class="t" style="transform:scaleX(0.986);transform-origin:0 0;left:83.2px;top:349px;font-size:11px;color:#e8e8e8">Bottom Layer</div>
<div class="t" style="left:179px;top:349px;font-size:11px;color:#e8e8e8">2</div>
<div class="t" style="transform:scaleX(0.932);transform-origin:0 0;left:205.5px;top:349px;font-size:11px;color:#e8e8e8">Signal</div>
<div class="t" style="transform:scaleX(0.961);transform-origin:0 0;left:16.5px;top:371px;font-size:11px;color:#d8d8d8;letter-spacing:0.3px">If no layer checked, Active layer is used.</div>

<div class="arr" style="left:11px;top:406px"></div>
<div class="t sec" style="transform:scaleX(0.907);transform-origin:0 0;left:20.3px;top:403px;">Control</div>
<div class="grp" style="left:9px;top:423px;width:301px;height:136px"></div>
<div class="t lbl" style="transform:scaleX(0.870);transform-origin:0 0;left:16.0px;top:429px">Track-Track Space In Route Guide</div>
<div class="hr" style="left:16px;top:448px;width:287px"></div>
<div class="btn" style="left:16px;top:462px;width:86px;height:20px;background:#434343;border-color:#4e4e4e;border-radius:2px"></div>
<div class="t lbl" style="left:22px;top:465px;color:#707070">Rule</div>
<div class="a" style="left:117px;top:464px;width:186px;height:8px;background:#393939;border-radius:3px"></div>
<div class="a" style="left:117px;top:463px;width:4px;height:10.5px;background:#565656;border-radius:1.5px"></div>
<div class="t sld" style="left:125px;top:473px">Rule</div>
<div class="t sld" style="left:145px;top:473px">4</div>
<div class="t sld" style="left:170px;top:473px">5</div>
<div class="t sld" style="left:196px;top:473px">6</div>
<div class="t sld" style="left:222px;top:473px">7</div>
<div class="t sld" style="left:248px;top:473px">8</div>
<div class="t sld" style="left:274px;top:473px">9</div>
<div class="t sld" style="left:297px;top:473px">10</div>
<div class="t lbl" style="transform:scaleX(0.925);transform-origin:0 0;left:16.0px;top:498px">Meander % Over Manhattan Length</div>
<div class="hr" style="left:16px;top:517px;width:287px"></div>
<div class="a" style="left:16px;top:530px;width:86px;height:21px;background:#2b2b2b;border-radius:2px"></div>
<div class="t lbl" style="left:22px;top:534px;color:#f4f4f4">100</div>
<div class="a" style="left:116.5px;top:533.4px;width:186.5px;height:8px;background:#2c2c2c;border-radius:4px"></div>
<div class="a" style="left:225.6px;top:532px;width:5px;height:10.4px;background:#dedede;border-radius:1.5px"></div>
<div class="t sl" style="left:119px;top:542px">0</div>
<div class="t sl" style="left:155px;top:542px">30</div>
<div class="t sl" style="left:191px;top:542px">50</div>
<div class="t sl" style="left:228px;top:542px">100</div>
<div class="t sl" style="left:264px;top:542px">150</div>
<div class="t sl" style="left:294px;top:542px">200</div>

<div class="arr" style="left:11px;top:575px"></div>
<div class="t sec" style="transform:scaleX(0.889);transform-origin:0 0;left:20.3px;top:572px;">Tune</div>
<div class="grp" style="left:9px;top:592px;width:301px;height:90px"></div>
<div class="btn" style="left:16px;top:600px;width:287px;height:22px;background:#424242;border-color:#4c4c4c;border-radius:2px"></div>
<div class="a" style="left:18px;top:602px;width:26px;height:18px;background:#474747"></div>
<div class="t lbl" style="transform:scaleX(0.907);transform-origin:0 0;left:51.5px;top:604px;color:#737373">Match Length Rules for Selected</div>
<div class="t lbl" style="transform:scaleX(0.907);transform-origin:0 0;left:16.0px;top:646px">Single Ended</div>
<div class="hr" style="left:16px;top:666px;width:287px"></div>

<div class="a" style="left:315px;top:147px;width:6px;height:272px;background:#7e7e7e;border-radius:3px"></div>
<div class="a" style="left:314px;top:135px;width:0;height:0;border-left:4px solid transparent;border-right:4px solid transparent;border-bottom:5px solid #6a6a6a"></div>
<div class="a" style="left:314px;top:668px;width:0;height:0;border-left:4px solid transparent;border-right:4px solid transparent;border-top:5px solid #6a6a6a"></div>
<div class="a" id="canvas" style="left:330px;top:132px;width:866px;height:543px;background:#000;overflow:hidden">
<svg width="866" height="543" viewBox="0 0 866 543" style="left:0;top:0">
<defs><pattern id="hatch" width="5.7" height="5.7" patternUnits="userSpaceOnUse" patternTransform="rotate(45)"><rect width="5.7" height="5.7" fill="#16031f"/><rect width="5.7" height="0.7" fill="#a030a8"/></pattern><pattern id="grid" width="4.62" height="4.62" patternUnits="userSpaceOnUse"><rect x="0" y="0" width="1" height="1" fill="#0c0c0c"/></pattern></defs>
<rect x="0" y="0" width="866" height="543" fill="url(#grid)"/>
<rect x="145.9" y="179.5" width="53.3" height="14.0" fill="#240812" />
<rect x="145.9" y="253.5" width="53.3" height="13.7" fill="#240812" />
<rect x="130.3" y="196.4" width="14.0" height="52.4" fill="#240812" />
<rect x="202.7" y="196.4" width="13.7" height="52.4" fill="#240812" />
<rect x="142.3" y="191.8" width="62.4" height="63.4" fill="#2a0a34" />
<rect x="146.4" y="179.7" width="2.9" height="17.0" fill="#8e2046" />
<rect x="146.4" y="250.0" width="2.9" height="17.0" fill="#8e2046" />
<rect x="130.5" y="196.9" width="16.0" height="2.9" fill="#8e2046" />
<rect x="200.0" y="196.9" width="16.0" height="2.9" fill="#8e2046" />
<rect x="150.9" y="179.7" width="2.9" height="17.0" fill="#8e2046" />
<rect x="150.9" y="250.0" width="2.9" height="17.0" fill="#8e2046" />
<rect x="130.5" y="201.3" width="16.0" height="2.9" fill="#8e2046" />
<rect x="200.0" y="201.3" width="16.0" height="2.9" fill="#8e2046" />
<rect x="155.4" y="179.7" width="2.9" height="17.0" fill="#8e2046" />
<rect x="155.4" y="250.0" width="2.9" height="17.0" fill="#8e2046" />
<rect x="130.5" y="205.8" width="16.0" height="2.9" fill="#8e2046" />
<rect x="200.0" y="205.8" width="16.0" height="2.9" fill="#8e2046" />
<rect x="159.9" y="179.7" width="2.9" height="17.0" fill="#8e2046" />
<rect x="159.9" y="250.0" width="2.9" height="17.0" fill="#8e2046" />
<rect x="130.5" y="210.1" width="16.0" height="2.9" fill="#8e2046" />
<rect x="200.0" y="210.1" width="16.0" height="2.9" fill="#8e2046" />
<rect x="164.4" y="179.7" width="2.9" height="17.0" fill="#8e2046" />
<rect x="164.4" y="250.0" width="2.9" height="17.0" fill="#8e2046" />
<rect x="130.5" y="214.6" width="16.0" height="2.9" fill="#8e2046" />
<rect x="200.0" y="214.6" width="16.0" height="2.9" fill="#8e2046" />
<rect x="168.8" y="179.7" width="2.9" height="17.0" fill="#8e2046" />
<rect x="168.8" y="250.0" width="2.9" height="17.0" fill="#8e2046" />
<rect x="130.5" y="218.9" width="16.0" height="2.9" fill="#8e2046" />
<rect x="200.0" y="218.9" width="16.0" height="2.9" fill="#8e2046" />
<rect x="173.3" y="179.7" width="2.9" height="17.0" fill="#8e2046" />
<rect x="173.3" y="250.0" width="2.9" height="17.0" fill="#8e2046" />
<rect x="130.5" y="223.3" width="16.0" height="2.9" fill="#8e2046" />
<rect x="200.0" y="223.3" width="16.0" height="2.9" fill="#8e2046" />
<rect x="177.8" y="179.7" width="2.9" height="17.0" fill="#8e2046" />
<rect x="177.8" y="250.0" width="2.9" height="17.0" fill="#8e2046" />
<rect x="130.5" y="227.8" width="16.0" height="2.9" fill="#8e2046" />
<rect x="200.0" y="227.8" width="16.0" height="2.9" fill="#8e2046" />
<rect x="182.3" y="179.7" width="2.9" height="17.0" fill="#8e2046" />
<rect x="182.3" y="250.0" width="2.9" height="17.0" fill="#8e2046" />
<rect x="130.5" y="232.1" width="16.0" height="2.9" fill="#8e2046" />
<rect x="200.0" y="232.1" width="16.0" height="2.9" fill="#8e2046" />
<rect x="186.8" y="179.7" width="2.9" height="17.0" fill="#8e2046" />
<rect x="186.8" y="250.0" width="2.9" height="17.0" fill="#8e2046" />
<rect x="130.5" y="236.6" width="16.0" height="2.9" fill="#8e2046" />
<rect x="200.0" y="236.6" width="16.0" height="2.9" fill="#8e2046" />
<rect x="191.2" y="179.7" width="2.9" height="17.0" fill="#8e2046" />
<rect x="191.2" y="250.0" width="2.9" height="17.0" fill="#8e2046" />
<rect x="130.5" y="240.9" width="16.0" height="2.9" fill="#8e2046" />
<rect x="200.0" y="240.9" width="16.0" height="2.9" fill="#8e2046" />
<rect x="195.7" y="179.7" width="2.9" height="17.0" fill="#8e2046" />
<rect x="195.7" y="250.0" width="2.9" height="17.0" fill="#8e2046" />
<rect x="130.5" y="245.3" width="16.0" height="2.9" fill="#8e2046" />
<rect x="200.0" y="245.3" width="16.0" height="2.9" fill="#8e2046" />
<rect x="142.3" y="191.8" width="62.4" height="63.4" fill="none" stroke="#a030a8" stroke-width="0.9"/>
<rect x="140.8" y="190.3" width="3.0" height="3.0" fill="#18041c" stroke="#9030a0" stroke-width="0.8"/>
<rect x="203.2" y="190.3" width="3.0" height="3.0" fill="#18041c" stroke="#9030a0" stroke-width="0.8"/>
<rect x="140.8" y="253.7" width="3.0" height="3.0" fill="#18041c" stroke="#9030a0" stroke-width="0.8"/>
<rect x="203.2" y="253.7" width="3.0" height="3.0" fill="#18041c" stroke="#9030a0" stroke-width="0.8"/>
<rect x="146.5" y="197.5" width="53.0" height="52.0" fill="url(#hatch)" />
<rect x="146.5" y="197.5" width="53.0" height="52.0" fill="none" stroke="#a09420" stroke-width="1.4"/>
<circle cx="156.2" cy="206.5" r="4.4" fill="#b8b820"/>
<circle cx="136.3" cy="192" r="1.4" fill="none" stroke="#b8b820" stroke-width="1.2"/>
<rect x="128.3" y="178.8" width="89.3" height="88.3" fill="none" stroke="#1c5a1c" stroke-width="1"/>
<text x="129.60000000000002" y="172" font-family="Liberation Sans, sans-serif" font-size="19.5" fill="#8a8a3c" textLength="20.4" lengthAdjust="spacingAndGlyphs">U1</text>
<path d="M134.0 220.6L211.0 213.5M134.0 224.5L211.0 214.0M146.0 215.5L211.0 215.0" stroke="#8c8c74" stroke-width="1" fill="none" opacity="0.5"/>
<path d="M813.3 114.2L211.0 212.5M813.3 137.3L188.2 185.0M813.3 160.4L211.0 214.8M813.3 183.6L211.0 213.0M813.3 206.7L192.7 185.0M813.3 229.8L197.2 185.0M167.3 261.0L813.3 391.6M162.8 261.0L813.3 414.8M156.9 261.0L813.3 437.9M152.4 261.0L813.3 461.0M147.9 261.0L813.3 484.1M136.0 248.3L813.3 507.2M136.0 243.9L813.3 530.4M136.0 239.5L813.3 553.5M211.0 243.3L-4.0 372.0M211.0 245.2L-4.0 386.3M211.0 245.2L-4.0 401.6M211.0 241.1L-4.0 413.9M211.0 235.5L-4.0 427.8M208.4 234.0L-4.0 439.5M186.0 188.9L-4.0 246.0M177.8 187.0L-4.0 259.3M169.2 187.0L-4.0 272.0M163.2 187.0L-4.0 285.1M159.3 187.0L-4.0 296.7M156.6 187.0L-4.0 307.0M154.1 187.0L-4.0 318.8M143.7 189.0L-4.0 405.2M147.5 189.0L-4.0 417.7M145.3 189.0L-4.0 430.7M147.8 189.0L-4.0 434.8M-4.0 234.6L148.0 259.0M-4.0 248.2L148.0 257.5M-4.0 261.6L148.0 260.4M813.3 114.2L870.0 169.8M813.3 137.3L870.0 191.6M813.3 160.4L870.0 213.4M813.3 183.6L870.0 235.2M813.3 206.7L870.0 257.0M813.3 229.8L870.0 278.8M813.3 252.9L870.0 300.7M813.3 276.0L870.0 322.5M813.3 299.2L870.0 344.3M813.3 322.3L870.0 366.1M813.3 345.4L870.0 387.9M813.3 368.5L870.0 409.7M813.3 391.6L870.0 431.6M813.3 414.8L870.0 453.4M813.3 437.9L870.0 475.2M813.3 461.0L870.0 497.0M813.3 484.1L870.0 518.8M813.3 507.2L870.0 540.6M813.3 530.4L870.0 562.5" stroke="#84846f" stroke-width="0.85" fill="none"/>
<path d="M260.20000000000005 225.5L606 225.5L644.5 263.8" stroke="#a00000" stroke-width="33.4" stroke-linecap="round" stroke-linejoin="round" fill="none"/>
<path d="M208.5 207.1L260.4 225.4M208.5 211.6L260.4 225.4M208.5 216.0L260.4 225.4M208.5 220.5L260.4 225.4M208.5 225.0L260.4 225.4M208.5 229.5L260.4 225.4M645.3 262.4L813.3 252.9M645.3 262.4L813.3 276.0M645.3 262.4L813.3 299.2M645.3 262.4L813.3 322.3M645.3 262.4L813.3 345.4M645.3 262.4L813.3 368.5" stroke="#ffffff" stroke-width="2.6" stroke-linecap="round" fill="none"/>
<rect x="801.7" y="102.4" width="23.3" height="460.0" fill="none" stroke="#9c9c38" stroke-width="1.3"/>
<circle cx="813.3" cy="114.2" r="7.5" fill="#4c1c48"/><circle cx="813.3" cy="114.2" r="6.7" fill="#aca4b4"/><circle cx="813.3" cy="114.2" r="4.1" fill="#128474"/>
<circle cx="813.3" cy="137.3" r="7.5" fill="#4c1c48"/><circle cx="813.3" cy="137.3" r="6.7" fill="#aca4b4"/><circle cx="813.3" cy="137.3" r="4.1" fill="#128474"/>
<circle cx="813.3" cy="160.4" r="7.5" fill="#4c1c48"/><circle cx="813.3" cy="160.4" r="6.7" fill="#aca4b4"/><circle cx="813.3" cy="160.4" r="4.1" fill="#128474"/>
<circle cx="813.3" cy="183.6" r="7.5" fill="#4c1c48"/><circle cx="813.3" cy="183.6" r="6.7" fill="#aca4b4"/><circle cx="813.3" cy="183.6" r="4.1" fill="#128474"/>
<circle cx="813.3" cy="206.7" r="7.5" fill="#4c1c48"/><circle cx="813.3" cy="206.7" r="6.7" fill="#aca4b4"/><circle cx="813.3" cy="206.7" r="4.1" fill="#128474"/>
<circle cx="813.3" cy="229.8" r="7.5" fill="#4c1c48"/><circle cx="813.3" cy="229.8" r="6.7" fill="#aca4b4"/><circle cx="813.3" cy="229.8" r="4.1" fill="#128474"/>
<circle cx="813.3" cy="252.9" r="7.5" fill="#4c1c48"/><circle cx="813.3" cy="252.9" r="6.7" fill="#aca4b4"/><circle cx="813.3" cy="252.9" r="4.1" fill="#128474"/>
<circle cx="813.3" cy="276.0" r="7.5" fill="#4c1c48"/><circle cx="813.3" cy="276.0" r="6.7" fill="#aca4b4"/><circle cx="813.3" cy="276.0" r="4.1" fill="#128474"/>
<circle cx="813.3" cy="299.2" r="7.5" fill="#4c1c48"/><circle cx="813.3" cy="299.2" r="6.7" fill="#aca4b4"/><circle cx="813.3" cy="299.2" r="4.1" fill="#128474"/>
<circle cx="813.3" cy="322.3" r="7.5" fill="#4c1c48"/><circle cx="813.3" cy="322.3" r="6.7" fill="#aca4b4"/><circle cx="813.3" cy="322.3" r="4.1" fill="#128474"/>
<circle cx="813.3" cy="345.4" r="7.5" fill="#4c1c48"/><circle cx="813.3" cy="345.4" r="6.7" fill="#aca4b4"/><circle cx="813.3" cy="345.4" r="4.1" fill="#128474"/>
<circle cx="813.3" cy="368.5" r="7.5" fill="#4c1c48"/><circle cx="813.3" cy="368.5" r="6.7" fill="#aca4b4"/><circle cx="813.3" cy="368.5" r="4.1" fill="#128474"/>
<circle cx="813.3" cy="391.6" r="7.5" fill="#4c1c48"/><circle cx="813.3" cy="391.6" r="6.7" fill="#aca4b4"/><circle cx="813.3" cy="391.6" r="4.1" fill="#128474"/>
<circle cx="813.3" cy="414.8" r="7.5" fill="#4c1c48"/><circle cx="813.3" cy="414.8" r="6.7" fill="#aca4b4"/><circle cx="813.3" cy="414.8" r="4.1" fill="#128474"/>
<circle cx="813.3" cy="437.9" r="7.5" fill="#4c1c48"/><circle cx="813.3" cy="437.9" r="6.7" fill="#aca4b4"/><circle cx="813.3" cy="437.9" r="4.1" fill="#128474"/>
<circle cx="813.3" cy="461.0" r="7.5" fill="#4c1c48"/><circle cx="813.3" cy="461.0" r="6.7" fill="#aca4b4"/><circle cx="813.3" cy="461.0" r="4.1" fill="#128474"/>
<circle cx="813.3" cy="484.1" r="7.5" fill="#4c1c48"/><circle cx="813.3" cy="484.1" r="6.7" fill="#aca4b4"/><circle cx="813.3" cy="484.1" r="4.1" fill="#128474"/>
<circle cx="813.3" cy="507.2" r="7.5" fill="#4c1c48"/><circle cx="813.3" cy="507.2" r="6.7" fill="#aca4b4"/><circle cx="813.3" cy="507.2" r="4.1" fill="#128474"/>
<circle cx="813.3" cy="530.4" r="7.5" fill="#4c1c48"/><circle cx="813.3" cy="530.4" r="6.7" fill="#aca4b4"/><circle cx="813.3" cy="530.4" r="4.1" fill="#128474"/>
<text x="802" y="95.4" font-family="Liberation Sans, sans-serif" font-size="20.5" fill="#8a8a3c" textLength="21" lengthAdjust="spacingAndGlyphs">P1</text>
<path d="M805.3 253.4L813.3 252.9M805.3 275.4L813.3 276.0M805.3 297.4L813.3 299.2M805.3 319.4L813.3 322.3M805.3 341.4L813.3 345.4M805.3 363.5L813.3 368.5" stroke="#ffffff" stroke-width="2.6" stroke-linecap="round" fill="none"/>
</svg>
<div class="a" style="left:1.5px;top:1px;width:201px;height:66.5px;background:linear-gradient(to bottom,#000 0%,#020a12 15%,#0c2c48 60%,#174a70 100%);"></div>
<div class="t hud" style="left:6px;top:6px;">x:</div><div class="t hud" style="transform:scaleX(1.011);transform-origin:0 0;left:25.2px;top:6px;">4440.000</div><div class="t hud" style="left:91px;top:6px;">dx:</div><div class="t hud" style="transform:scaleX(0.995);transform-origin:0 0;left:119.2px;top:6px;">-645.000</div><div class="t hud" style="left:174px;top:6px;">mil</div>
<div class="t hud" style="left:6px;top:21px;">y:</div><div class="t hud" style="transform:scaleX(1.011);transform-origin:0 0;left:25.2px;top:21px;">3585.000</div><div class="t hud" style="left:91px;top:21px;">dy:</div><div class="t hud" style="transform:scaleX(0.995);transform-origin:0 0;left:119.2px;top:21px;">-100.000</div><div class="t hud" style="left:174px;top:21px;">mil</div>
<div class="t" style="transform:scaleX(1.003);transform-origin:0 0;left:6.8px;top:35px;font-weight:bold;font-size:16px;line-height:18px;height:18px;color:#f2f244;">Top Layer</div>
<div class="t" style="transform:scaleX(1.053);transform-origin:0 0;left:5.9px;top:52.5px;font-weight:bold;font-size:10.5px;color:#d4dcdc;">Snap: 5mil Hotspot Snap: 8mil</div>
<style>.hud{font-weight:bold;font-size:12.5px;color:#e0e0cc;}</style>

<div class="a" style="left:316.4px;top:3px;width:372px;height:27.5px;background:#3d3d3d;border-radius:2px"></div>
<div class="a" style="left:432px;top:6px;width:1px;height:21px;background:#2a2a2a"></div>
<div class="a" style="left:371.0px;top:25px;width:0;height:0;border-left:5px solid transparent;border-bottom:5px solid #d8d8d8"></div>
<div class="a" style="left:399.1px;top:25px;width:0;height:0;border-left:5px solid transparent;border-bottom:5px solid #d8d8d8"></div>
<div class="a" style="left:427.1px;top:25px;width:0;height:0;border-left:5px solid transparent;border-bottom:5px solid #d8d8d8"></div>
<div class="a" style="left:455.2px;top:25px;width:0;height:0;border-left:5px solid transparent;border-bottom:5px solid #d8d8d8"></div>
<div class="a" style="left:483.2px;top:25px;width:0;height:0;border-left:5px solid transparent;border-bottom:5px solid #d8d8d8"></div>
<div class="a" style="left:511.3px;top:25px;width:0;height:0;border-left:5px solid transparent;border-bottom:5px solid #d8d8d8"></div>
<div class="a" style="left:539.4px;top:25px;width:0;height:0;border-left:5px solid transparent;border-bottom:5px solid #d8d8d8"></div>
<div class="a" style="left:567.4px;top:25px;width:0;height:0;border-left:5px solid transparent;border-bottom:5px solid #d8d8d8"></div>
<div class="a" style="left:595.5px;top:25px;width:0;height:0;border-left:5px solid transparent;border-bottom:5px solid #d8d8d8"></div>
<div class="a" style="left:623.5px;top:25px;width:0;height:0;border-left:5px solid transparent;border-bottom:5px solid #d8d8d8"></div>
<div class="a" style="left:651.5px;top:25px;width:0;height:0;border-left:5px solid transparent;border-bottom:5px solid #d8d8d8"></div>
<div class="a" style="left:679.6px;top:25px;width:0;height:0;border-left:5px solid transparent;border-bottom:5px solid #d8d8d8"></div>
<svg style="left:326.7px;top:8.9px" width="16" height="16" viewBox="0 0 16.84 16.84"><path d="M1.4 2.2h13.2v1.8l-4.8 4.8v5.6H6.2V8.8L1.4 4z" fill="#a8d0ec"/></svg>

<svg style="left:354.2px;top:8.9px" width="16" height="16" viewBox="0 0 16.84 16.84"><path d="M8 0.6v14.8M0.6 8h14.8" stroke="#5c8cd0" stroke-width="1.2"/><path d="M8 0l1.4 2H6.6zM8 16l1.4-2H6.6zM0 8l2-1.4v2.8zM16 8l-2-1.4v2.8z" fill="#5c8cd0"/></svg>

<svg style="left:382.4px;top:8.9px" width="16" height="16" viewBox="0 0 16.84 16.84"><rect x="1" y="1" width="14" height="14" fill="none" stroke="#6a84b8" stroke-width="1" stroke-dasharray="1.7 1.3"/></svg>

<svg style="left:410.2px;top:8.9px" width="16" height="16" viewBox="0 0 16.84 16.84"><rect x="1.4" y="5" width="3.6" height="6.6" fill="#f09898"/><rect x="6.2" y="1.6" width="3.6" height="10" fill="#88c0f0"/><rect x="11" y="5" width="3.6" height="6.6" fill="#f09898"/><rect x="1.4" y="13" width="13.2" height="1.8" fill="#88c0f0"/></svg>

<svg style="left:438.4px;top:8.9px" width="16" height="16" viewBox="0 0 16.84 16.84"><path d="M4 0.6v14.8M0.6 4h14.8" stroke="#a8b0b8" stroke-width="0.9"/><path d="M6 0.6v14.8M0.6 6h14.8" stroke="#a8b0b8" stroke-width="0.9"/><path d="M8 0.6v14.8M0.6 8h14.8" stroke="#a8b0b8" stroke-width="0.9"/><path d="M10 0.6v14.8M0.6 10h14.8" stroke="#a8b0b8" stroke-width="0.9"/><path d="M12 0.6v14.8M0.6 12h14.8" stroke="#a8b0b8" stroke-width="0.9"/><rect x="2.6" y="2.6" width="10.8" height="10.8" fill="#d8e0e8"/></svg>

<svg style="left:466.4px;top:8.9px" width="16" height="16" viewBox="0 0 16.84 16.84"><path d="M2.6 13.4L12.6 3.4" stroke="#6c8cc8" stroke-width="1.6"/><path d="M2 9V2.6h5" stroke="#e8b830" stroke-width="1.4" fill="none"/><path d="M6.6 0.4L9.4 2.6 6.6 4.8z" fill="#e8b830"/><circle cx="2.6" cy="13.6" r="1.7" fill="#414141" stroke="#e8b830" stroke-width="1.2"/><circle cx="13.2" cy="3" r="1.7" fill="#414141" stroke="#e8b830" stroke-width="1.2"/></svg>

<svg style="left:494.8px;top:8.9px" width="16" height="16" viewBox="0 0 16.84 16.84"><path d="M2.4 12.4V6.4a2.2 2.2 0 0 1 4.4 0v3.2a2.2 2.2 0 0 0 4.4 0V6.4a2.2 2.2 0 0 1 4.4 0" transform="translate(-1,0)" stroke="#6c8cc8" stroke-width="1.5" fill="none"/><circle cx="1.6" cy="12.6" r="1.3" fill="#414141" stroke="#e8b830" stroke-width="1.2"/><circle cx="14.6" cy="12.6" r="1.3" fill="#414141" stroke="#e8b830" stroke-width="1.2"/></svg>

<svg style="left:522.4px;top:8.9px" width="16" height="16" viewBox="0 0 16.84 16.84"><rect x="10.4" y="4.6" width="6" height="3" fill="#30a838"/><rect x="5.2" y="10.4" width="3.4" height="5.4" fill="#e8b830"/><circle cx="7" cy="6.4" r="4.2" fill="none" stroke="#f0c820" stroke-width="4"/><circle cx="7" cy="6.4" r="1.8" fill="#4a3010"/></svg>

<svg style="left:550.8px;top:8.9px" width="16" height="16" viewBox="0 0 16.84 16.84"><path d="M0 14.4V8.4h5.4V3h10.8v11.4z" fill="#b8dcf0"/><path d="M0 14.4V8.4h5.4V3h10.8v11.4z" fill="none" stroke="#d8ecf8" stroke-width="0.7"/></svg>

<svg style="left:579.0px;top:8.9px" width="16" height="16" viewBox="0 0 16.84 16.84"><rect x="0.8" y="0.8" width="14.4" height="14.4" fill="#484048" stroke="#e0a0d8" stroke-width="1.2"/><path d="M4.4 11.6L11.6 4.4" stroke="#6c8cc8" stroke-width="1.3"/><circle cx="4" cy="12" r="1.2" fill="#414141" stroke="#e8b830" stroke-width="1.2"/><circle cx="12" cy="4" r="1.2" fill="#414141" stroke="#e8b830" stroke-width="1.2"/></svg>

<svg style="left:607.4px;top:8.9px" width="16" height="16" viewBox="0 0 16.84 16.84"><path d="M2.4 2v12.6h11.2V2" stroke="#6c8cc8" stroke-width="1.2" fill="none"/><circle cx="2.4" cy="1.8" r="1.1" fill="#414141" stroke="#e8b830" stroke-width="1.2"/><circle cx="13.6" cy="1.8" r="1.1" fill="#414141" stroke="#e8b830" stroke-width="1.2"/><text x="8" y="12" text-anchor="middle" font-family="Liberation Sans, sans-serif" font-size="8" fill="#a8c0e0">10</text></svg>

<svg style="left:635.4px;top:8.9px" width="16" height="16" viewBox="0 0 16.84 16.84"><text x="8" y="15" text-anchor="middle" font-family="Liberation Serif, serif" font-size="20.5" font-weight="bold" fill="#6a96d4">A</text></svg>

<svg style="left:663.4px;top:8.9px" width="16" height="16" viewBox="0 0 16.84 16.84"><path d="M1.6 14.4L14.4 1.6" stroke="#5c8cd0" stroke-width="2.2"/></svg>

</div>

<div class="a" style="left:331px;top:108px;width:104px;height:24px;background:#363636;border-radius:3px 3px 0 0"></div>
<div class="a" style="left:436px;top:108.5px;width:103px;height:24px;background:#4b4b4b;border-radius:3px 3px 0 0"></div>
<div class="t" style="transform:scaleX(0.979);transform-origin:0 0;left:354.8px;top:113px;font-size:12px;color:#e8e8e8">测试.SchDoc *</div>
<div class="t" style="transform:scaleX(0.979);transform-origin:0 0;left:460.3px;top:113px;font-size:12px;color:#f4f4f4">测试.PcbDoc *</div>
<svg style="left:335.2px;top:110.6px" width="16" height="16" viewBox="0 0 16.00 16.00"><rect x="0.5" y="2" width="15" height="11.6" fill="#f0d880"/><rect x="0.5" y="2" width="15" height="2.2" fill="#f8ecb0"/><path d="M6.6 4.2v9.4" stroke="#c0a040" stroke-width="0.8"/><path d="M8.4 8.6h6M8.4 10.6h6M8.4 12.4h6" stroke="#c8a848" stroke-width="1"/></svg>
<svg style="left:439.8px;top:110.8px" width="16" height="16" viewBox="0 0 16.00 16.00"><rect x="0.4" y="2.4" width="15.2" height="11" fill="#188858"/><rect x="8.6" y="4" width="5.4" height="4.6" fill="#e8f4ec"/><path d="M2 4.6h5M2 6.8h5" stroke="#d0f0e0" stroke-width="1.2" stroke-dasharray="1.4 0.8"/><path d="M3 13.4v-2.6M5.6 13.4v-2.6M8.2 13.4v-2.6M10.8 13.4v-2.6M13.4 13.4v-2.6" stroke="#e8f4ec" stroke-width="1.2"/></svg>
</body></html>
